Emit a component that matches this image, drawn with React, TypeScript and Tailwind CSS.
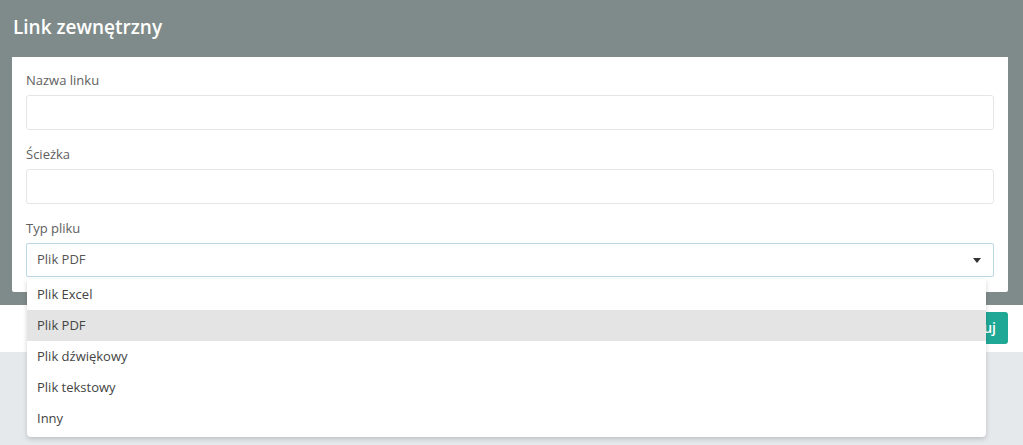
import React from "react";

const font = { fontFamily: '"Open Sans", "Noto Sans", sans-serif' };

export default function App() {
  const items = ["Plik Excel", "Plik PDF", "Plik dźwiękowy", "Plik tekstowy", "Inny"];
  return (
    <div className="relative w-[1023px] h-[445px] bg-[#e6e9ec] overflow-hidden" style={font}>
      <div className="flex flex-col">
        <div className="h-[57px] bg-[#7f8b8a] flex items-center pl-[13px] pb-[3px]">
          <h1 className="text-white text-[19px] font-semibold leading-none">Link zewnętrzny</h1>
        </div>
        <div className="bg-[#7f8b8a] pl-[12px] pr-[15px] pb-[13px]">
          <div className="bg-white rounded-b-[2px] px-[14px] pt-[14px] pb-[15px] flex flex-col">
            <label className="text-[13px] text-[#606060] leading-[18px] h-[24px]">Nazwa linku</label>
            <div className="h-[35px] border border-[#e4e7e9] rounded-[3px] bg-white" />
            <label className="text-[13px] text-[#606060] leading-[18px] h-[24px] mt-[15px]">Ścieżka</label>
            <div className="h-[35px] border border-[#e4e7e9] rounded-[3px] bg-white" />
            <label className="text-[13px] text-[#606060] leading-[18px] h-[24px] mt-[15px]">Typ pliku</label>
            <div className="h-[34px] border border-[#bcd7e4] rounded-[2px] bg-white flex items-center pl-[10px] pr-[12px]">
              <span className="text-[13px] text-[#555] flex-1">Plik PDF</span>
              <svg width="8" height="5" viewBox="0 0 8 5"><path d="M0 0h8L4 5z" fill="#333" /></svg>
            </div>
          </div>
        </div>
        <div className="bg-white h-[47px] flex items-center justify-end pr-[15px]">
          <button className="h-[32px] px-[12px] rounded-[3px] bg-[#1fa896] text-white text-[14px] font-semibold mt-[-2px]">Zastosuj</button>
        </div>
      </div>
      <div className="absolute left-[27px] top-[279px] w-[959px] bg-white rounded-b-[4px] shadow-[0_2px_5px_rgba(0,0,0,0.18)] pb-[3px]">
        {items.map((it) => (
          <div
            key={it}
            className={`h-[31px] flex items-center pl-[10px] pt-[1px] text-[13px] text-[#444] ${it === "Plik PDF" ? "bg-[#e4e4e4]" : ""}`}
          >
            {it}
          </div>
        ))}
      </div>
    </div>
  );
}
